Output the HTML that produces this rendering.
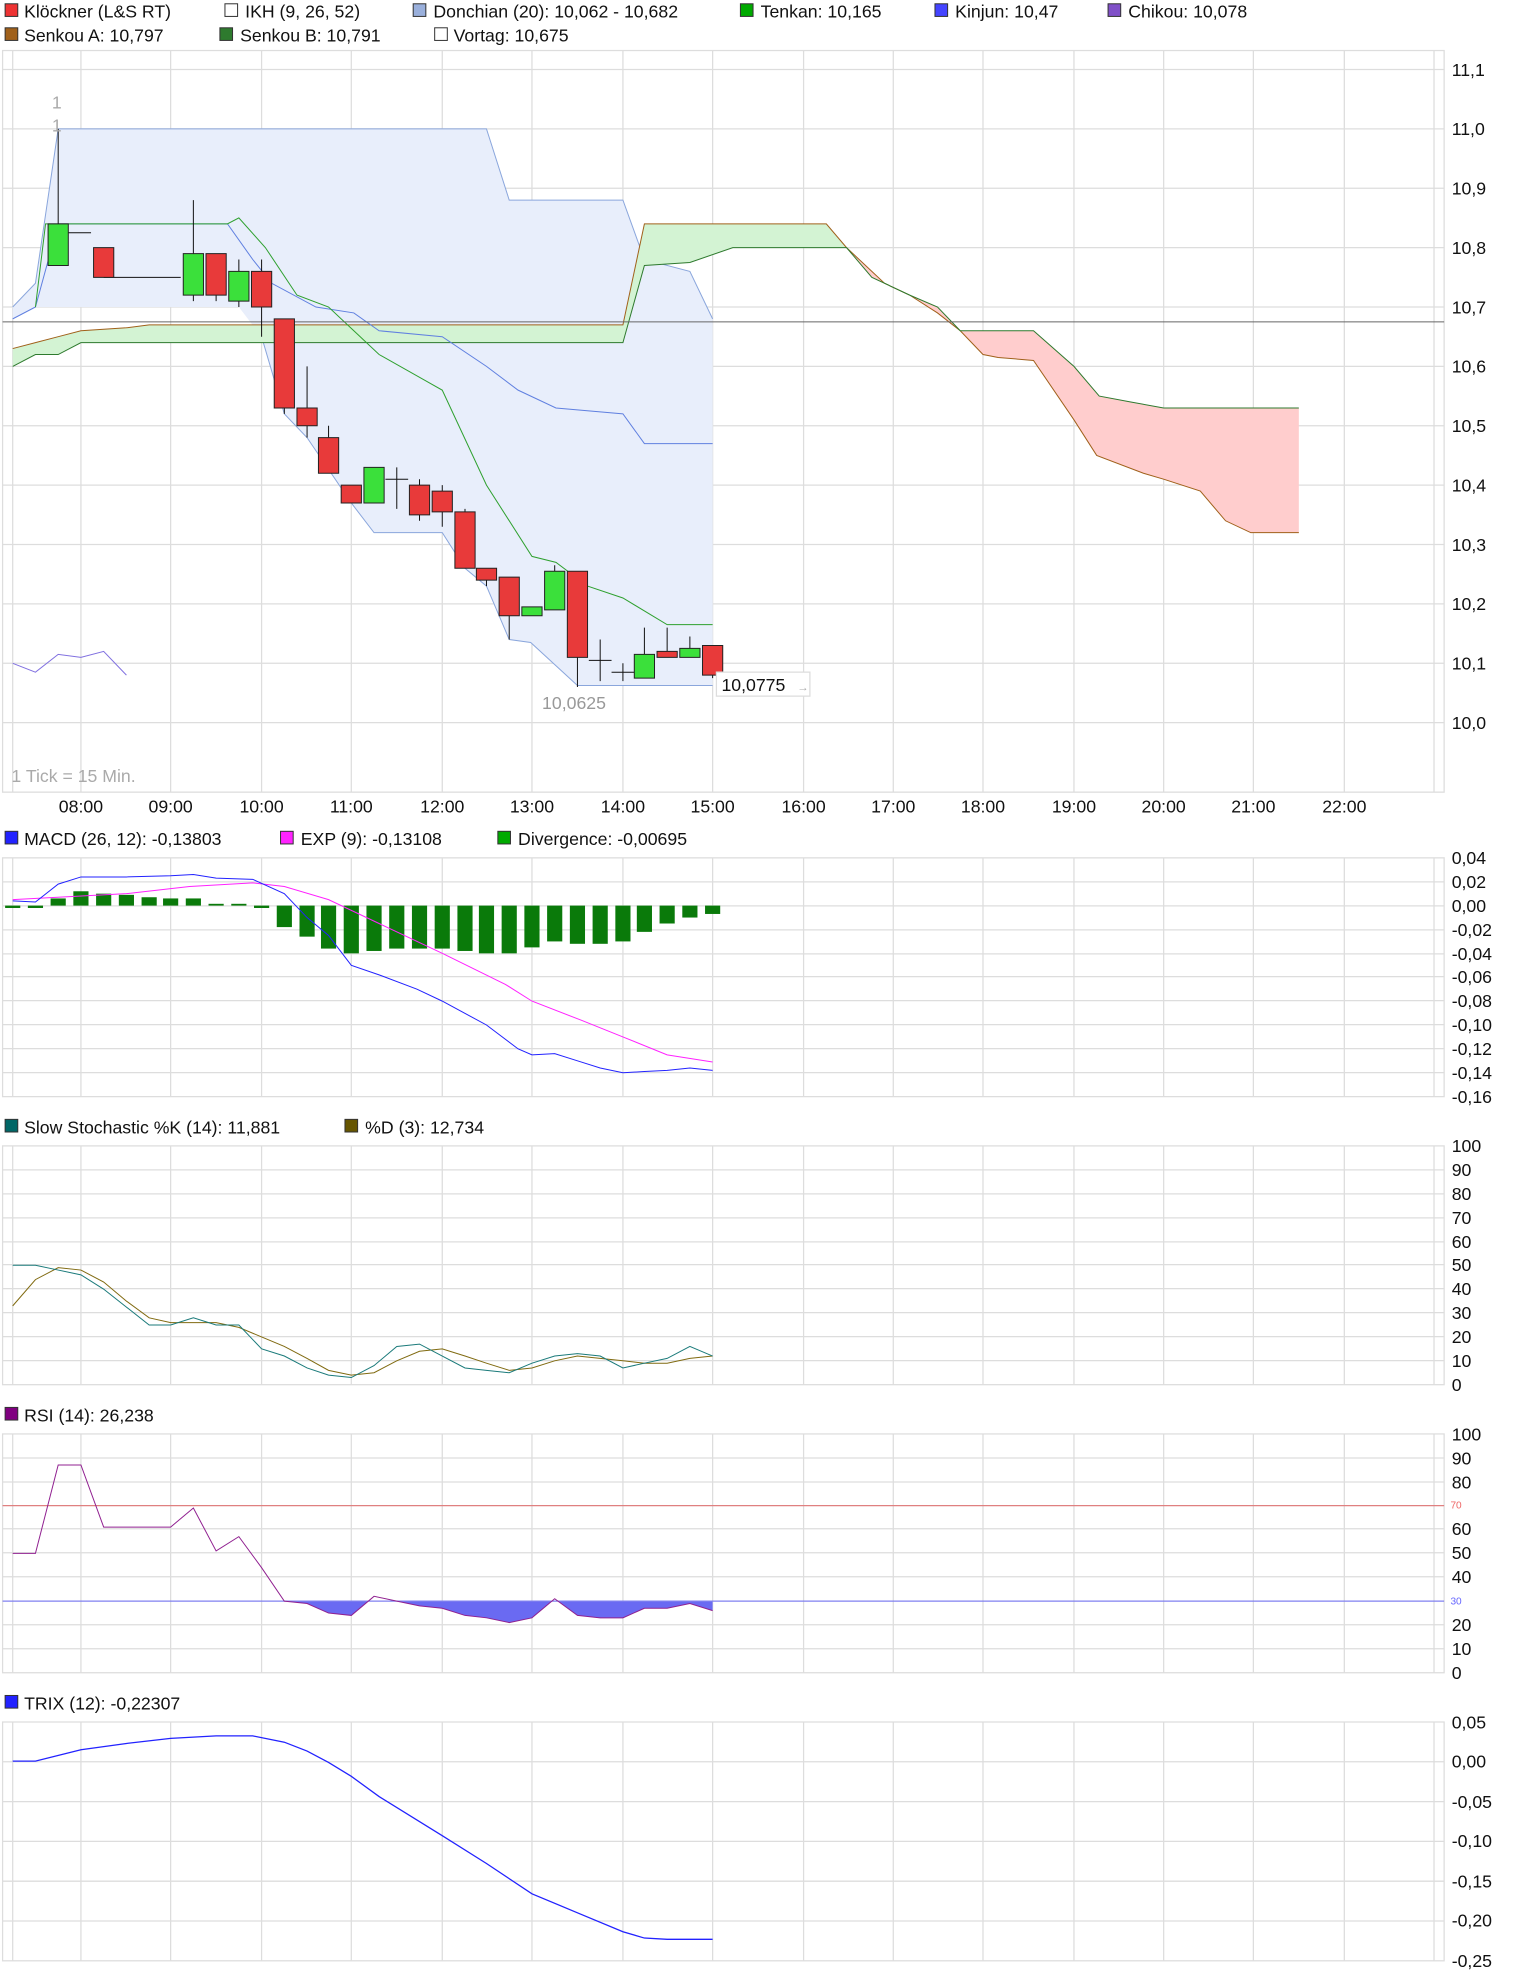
<!DOCTYPE html>
<html><head><meta charset="utf-8"><style>
html,body{margin:0;padding:0;background:#fff;width:1520px;height:1981px;overflow:hidden}
svg{display:block}
text{font-family:"Liberation Sans",sans-serif;font-size:14px;fill:#111}
.ax text{font-size:14px}
.g{stroke:#ddd;stroke-width:1;fill:none}
.ns{vector-effect:non-scaling-stroke}
</style></head><body>
<svg width="1520" height="1981" viewBox="0 0 1203 1568" xmlns="http://www.w3.org/2000/svg">
<g>
<rect x="4" y="3" width="10" height="10" fill="#e33" stroke="#333" stroke-width=".8"/><text x="19" y="14">Klöckner (L&amp;S RT)</text>
<rect x="178" y="3" width="10" height="10" fill="#fff" stroke="#333" stroke-width=".8"/><text x="194" y="14">IKH (9, 26, 52)</text>
<rect x="327" y="3" width="10" height="10" fill="#9ab0dc" stroke="#333" stroke-width=".8"/><text x="343" y="14">Donchian (20): 10,062 - 10,682</text>
<rect x="586" y="3" width="10" height="10" fill="#0a0" stroke="#333" stroke-width=".8"/><text x="602" y="14">Tenkan: 10,165</text>
<rect x="740" y="3" width="10" height="10" fill="#44f" stroke="#333" stroke-width=".8"/><text x="756" y="14">Kinjun: 10,47</text>
<rect x="877" y="3" width="10" height="10" fill="#8050c8" stroke="#333" stroke-width=".8"/><text x="893" y="14">Chikou: 10,078</text>
<rect x="4" y="22" width="10" height="10" fill="#a0601a" stroke="#333" stroke-width=".8"/><text x="19" y="33">Senkou A: 10,797</text>
<rect x="174" y="22" width="10" height="10" fill="#2e7a2e" stroke="#333" stroke-width=".8"/><text x="190" y="33">Senkou B: 10,791</text>
<rect x="344" y="22" width="10" height="10" fill="#fff" stroke="#333" stroke-width=".8"/><text x="359" y="33">Vortag: 10,675</text>
</g>

<g class="g">
<rect x="2" y="40" width="1141" height="587"/>
<path d="M10 40V627M64 40V627M135 40V627M207 40V627M278 40V627M350 40V627M421 40V627M493 40V627M564 40V627M636 40V627M707 40V627M778 40V627M850 40V627M921 40V627M992 40V627M1064 40V627M1135 40V627"/>
<path d="M2 55H1143M2 102H1143M2 149H1143M2 196H1143M2 243H1143M2 290H1143M2 337H1143M2 384H1143M2 431H1143M2 478H1143M2 525H1143M2 572H1143"/>
</g>
<g class="ax">
<text x="1149" y="60">11,1</text><text x="1149" y="107">11,0</text><text x="1149" y="154">10,9</text><text x="1149" y="201">10,8</text><text x="1149" y="248">10,7</text><text x="1149" y="295">10,6</text><text x="1149" y="342">10,5</text><text x="1149" y="389">10,4</text><text x="1149" y="436">10,3</text><text x="1149" y="483">10,2</text><text x="1149" y="530">10,1</text><text x="1149" y="577">10,0</text>
<g text-anchor="middle"><text x="64" y="643">08:00</text><text x="135" y="643">09:00</text><text x="207" y="643">10:00</text><text x="278" y="643">11:00</text><text x="350" y="643">12:00</text><text x="421" y="643">13:00</text><text x="493" y="643">14:00</text><text x="564" y="643">15:00</text><text x="636" y="643">16:00</text><text x="707" y="643">17:00</text><text x="778" y="643">18:00</text><text x="850" y="643">19:00</text><text x="921" y="643">20:00</text><text x="992" y="643">21:00</text><text x="1064" y="643">22:00</text></g>
</g>
<text x="9" y="619" style="fill:#aaa">1 Tick = 15 Min.</text>

<g transform="matrix(1 0 0 -470 0 5272)">
<polygon class="ns" fill="#e8eefb" stroke="none" points="10,10.7 28,10.74 46,11.0 385,11.0 403,10.88 493,10.88 510,10.78 546,10.76 564,10.68 564,10.0625 457,10.0625 420,10.135 403,10.14 385,10.23 368,10.26 350,10.32 296,10.32 278,10.37 243,10.48 225,10.52 207,10.65 189,10.7 46,10.7 28,10.7 10,10.68"/>
<polyline class="ns" fill="none" stroke="#8aa6dc" stroke-width="1" points="10,10.7 28,10.74 46,11.0 385,11.0 403,10.88 493,10.88 510,10.78 546,10.76 564,10.68"/>
<polyline class="ns" fill="none" stroke="#8aa6dc" stroke-width="1" points="207,10.65 225,10.52 243,10.48 278,10.37 296,10.32 350,10.32 368,10.26 385,10.23 403,10.14 420,10.135 457,10.0625 564,10.0625"/>
<polygon class="ns" fill="#d3f3d3" points="10,10.63 28,10.64 46,10.65 64,10.66 100,10.665 118,10.67 493,10.67 510,10.84 654,10.84 670,10.8 654,10.8 580,10.8 546,10.775 510,10.77 493,10.64 118,10.64 64,10.64 46,10.62 28,10.62 10,10.6"/>
<polygon class="ns" fill="#ffcdcd" points="654,10.84 670,10.8 690,10.75 720,10.72 742,10.7 760,10.66 818,10.66 850,10.6 870,10.55 895,10.54 921,10.53 1028,10.53 1028,10.32 990,10.32 970,10.34 950,10.39 921,10.41 905,10.42 868,10.45 850,10.51 818,10.61 790,10.615 778,10.62 760,10.66 742,10.69 720,10.72 700,10.74 690,10.76 670,10.8"/>
<polyline class="ns" fill="none" stroke="#a0601a" stroke-width="1" points="10,10.63 28,10.64 46,10.65 64,10.66 100,10.665 118,10.67 493,10.67 510,10.84 654,10.84 670,10.8 700,10.74 720,10.72 742,10.69 760,10.66 778,10.62 790,10.615 818,10.61 850,10.51 868,10.45 905,10.42 921,10.41 950,10.39 970,10.34 990,10.32 1028,10.32"/>
<polyline class="ns" fill="none" stroke="#2e7a2e" stroke-width="1" points="10,10.6 28,10.62 46,10.62 64,10.64 118,10.64 493,10.64 510,10.77 546,10.775 580,10.8 654,10.8 670,10.8 690,10.75 720,10.72 742,10.7 760,10.66 818,10.66 850,10.6 870,10.55 895,10.54 921,10.53 1028,10.53"/>
<polyline class="ns" fill="none" stroke="#6080e0" stroke-width="1" points="10,10.68 28,10.7 46,10.84 180,10.84 200,10.78 215,10.74 250,10.7 280,10.69 300,10.66 350,10.65 385,10.6 410,10.56 440,10.53 493,10.52 510,10.47 564,10.47"/>
<polyline class="ns" fill="none" stroke="#2ea02e" stroke-width="1" points="28,10.7 36,10.84 180,10.84 189,10.85 210,10.8 235,10.72 260,10.7 280,10.66 300,10.62 350,10.56 385,10.4 421,10.28 440,10.27 465,10.23 493,10.21 528,10.165 564,10.165"/>
<polyline class="ns" fill="none" stroke="#8070e0" stroke-width="1" points="10,10.1 28,10.085 46,10.115 64,10.11 82,10.12 100,10.08"/>
<line class="ns" x1="2" x2="1143" y1="10.675" y2="10.675" stroke="#666" stroke-width="1"/>
<g class="ns" stroke="#111" stroke-width="1">
<path class="ns" d="M46 11.0V10.77M153 10.88V10.71M171 10.79V10.71M189 10.78V10.70M207 10.78V10.65M225 10.68V10.52M243 10.60V10.48M260 10.50V10.42M278 10.40V10.37M296 10.43V10.37M314 10.43V10.36M332 10.41V10.34M350 10.40V10.33M368 10.36V10.26M385 10.26V10.23M403 10.245V10.14M421 10.195V10.18M439 10.265V10.19M457 10.255V10.06M475 10.14V10.07M493 10.1V10.07M510 10.16V10.075M528 10.16V10.11M546 10.145V10.11M564 10.13V10.075M46 10.825H72M82 10.75H143M305 10.41H323M466 10.105H484M484 10.085H502"/>
</g>
<g class="ns" stroke="#222" stroke-width="1">
<rect class="ns" fill="#3be03b" x="38" y="10.77" width="16" height="0.07"/>
<rect class="ns" fill="#e83a3a" x="74" y="10.75" width="16" height="0.05"/>
<rect class="ns" fill="#3be03b" x="145" y="10.72" width="16" height="0.07"/>
<rect class="ns" fill="#e83a3a" x="163" y="10.72" width="16" height="0.07"/>
<rect class="ns" fill="#3be03b" x="181" y="10.71" width="16" height="0.05"/>
<rect class="ns" fill="#e83a3a" x="199" y="10.70" width="16" height="0.06"/>
<rect class="ns" fill="#e83a3a" x="217" y="10.53" width="16" height="0.15"/>
<rect class="ns" fill="#e83a3a" x="235" y="10.50" width="16" height="0.03"/>
<rect class="ns" fill="#e83a3a" x="252" y="10.42" width="16" height="0.06"/>
<rect class="ns" fill="#e83a3a" x="270" y="10.37" width="16" height="0.03"/>
<rect class="ns" fill="#3be03b" x="288" y="10.37" width="16" height="0.06"/>
<rect class="ns" fill="#e83a3a" x="324" y="10.35" width="16" height="0.05"/>
<rect class="ns" fill="#e83a3a" x="342" y="10.355" width="16" height="0.035"/>
<rect class="ns" fill="#e83a3a" x="360" y="10.26" width="16" height="0.095"/>
<rect class="ns" fill="#e83a3a" x="377" y="10.24" width="16" height="0.02"/>
<rect class="ns" fill="#e83a3a" x="395" y="10.18" width="16" height="0.065"/>
<rect class="ns" fill="#3be03b" x="413" y="10.18" width="16" height="0.015"/>
<rect class="ns" fill="#3be03b" x="431" y="10.19" width="16" height="0.065"/>
<rect class="ns" fill="#e83a3a" x="449" y="10.11" width="16" height="0.145"/>
<rect class="ns" fill="#3be03b" x="502" y="10.075" width="16" height="0.04"/>
<rect class="ns" fill="#e83a3a" x="520" y="10.11" width="16" height="0.01"/>
<rect class="ns" fill="#3be03b" x="538" y="10.11" width="16" height="0.015"/>
<rect class="ns" fill="#e83a3a" x="556" y="10.08" width="16" height="0.05"/>
</g>
</g>
<text x="41" y="86" style="fill:#aaa">1</text>
<text x="41" y="104" style="fill:#aaa">1</text>
<text x="429" y="561" style="fill:#999">10,0625</text>
<rect x="567" y="532" width="74" height="19" fill="#fff" stroke="#ddd"/>
<text x="571" y="547">10,0775</text><text x="631" y="547" style="font-size:9px;fill:#aaa">→</text>

<rect x="4" y="658" width="10" height="10" fill="#22f" stroke="#333" stroke-width=".8"/><text x="19" y="669">MACD (26, 12): -0,13803</text>
<rect x="222" y="658" width="10" height="10" fill="#f2f" stroke="#333" stroke-width=".8"/><text x="238" y="669">EXP (9): -0,13108</text>
<rect x="394" y="658" width="10" height="10" fill="#0a0" stroke="#333" stroke-width=".8"/><text x="410" y="669">Divergence: -0,00695</text>
<g class="g">
<rect x="2" y="679" width="1141" height="189"/>
<path d="M10 679V868M64 679V868M135 679V868M207 679V868M278 679V868M350 679V868M421 679V868M493 679V868M564 679V868M636 679V868M707 679V868M778 679V868M850 679V868M921 679V868M992 679V868M1064 679V868M1135 679V868"/>
<path d="M2 698H1143M2 717H1143M2 736H1143M2 755H1143M2 773H1143M2 792H1143M2 811H1143M2 830H1143M2 849H1143"/>
</g>
<g class="ax"><text x="1149" y="684">0,04</text><text x="1149" y="703">0,02</text><text x="1149" y="722">0,00</text><text x="1149" y="741">-0,02</text><text x="1149" y="760">-0,04</text><text x="1149" y="778">-0,06</text><text x="1149" y="797">-0,08</text><text x="1149" y="816">-0,10</text><text x="1149" y="835">-0,12</text><text x="1149" y="854">-0,14</text><text x="1149" y="873">-0,16</text></g>
<g transform="matrix(1 0 0 -945 0 716.8)" fill="#0a7a0a">
<rect x="4" y="-0.002" width="12" height="0.002"/><rect x="22" y="-0.002" width="12" height="0.002"/><rect x="40" y="0" width="12" height="0.006"/><rect x="58" y="0" width="12" height="0.012"/><rect x="76" y="0" width="12" height="0.01"/><rect x="94" y="0" width="12" height="0.009"/><rect x="112" y="0" width="12" height="0.007"/><rect x="129" y="0" width="12" height="0.006"/><rect x="147" y="0" width="12" height="0.006"/><rect x="165" y="0" width="12" height="0.0015"/><rect x="183" y="0" width="12" height="0.0015"/><rect x="201" y="-0.002" width="12" height="0.002"/><rect x="219" y="-0.018" width="12" height="0.018"/><rect x="237" y="-0.026" width="12" height="0.026"/><rect x="254" y="-0.036" width="12" height="0.036"/><rect x="272" y="-0.04" width="12" height="0.04"/><rect x="290" y="-0.038" width="12" height="0.038"/><rect x="308" y="-0.036" width="12" height="0.036"/><rect x="326" y="-0.036" width="12" height="0.036"/><rect x="344" y="-0.036" width="12" height="0.036"/><rect x="362" y="-0.038" width="12" height="0.038"/><rect x="379" y="-0.04" width="12" height="0.04"/><rect x="397" y="-0.04" width="12" height="0.04"/><rect x="415" y="-0.035" width="12" height="0.035"/><rect x="433" y="-0.03" width="12" height="0.03"/><rect x="451" y="-0.032" width="12" height="0.032"/><rect x="469" y="-0.032" width="12" height="0.032"/><rect x="487" y="-0.03" width="12" height="0.03"/><rect x="504" y="-0.022" width="12" height="0.022"/><rect x="522" y="-0.015" width="12" height="0.015"/><rect x="540" y="-0.01" width="12" height="0.01"/><rect x="558" y="-0.007" width="12" height="0.007"/>
<polyline class="ns" fill="none" stroke="#f2f" stroke-width="1" points="10,0.005 100,0.01 150,0.016 200,0.019 225,0.016 260,0.005 300,-0.015 350,-0.04 400,-0.066 421,-0.08 460,-0.096 493,-0.11 528,-0.125 564,-0.131"/>
<polyline class="ns" fill="none" stroke="#22f" stroke-width="1" points="10,0.004 28,0.003 46,0.018 64,0.024 100,0.024 135,0.025 153,0.026 171,0.023 200,0.022 225,0.01 243,-0.01 260,-0.025 278,-0.05 300,-0.058 330,-0.07 350,-0.08 385,-0.1 410,-0.12 421,-0.125 439,-0.124 457,-0.13 475,-0.136 493,-0.14 510,-0.139 528,-0.138 546,-0.136 564,-0.138"/>
</g>

<rect x="4" y="886" width="10" height="10" fill="#066" stroke="#333" stroke-width=".8"/><text x="19" y="897">Slow Stochastic %K (14): 11,881</text>
<rect x="273" y="886" width="10" height="10" fill="#665500" stroke="#333" stroke-width=".8"/><text x="289" y="897">%D (3): 12,734</text>
<g class="g">
<rect x="2" y="907" width="1141" height="189"/>
<path d="M10 907V1096M64 907V1096M135 907V1096M207 907V1096M278 907V1096M350 907V1096M421 907V1096M493 907V1096M564 907V1096M636 907V1096M707 907V1096M778 907V1096M850 907V1096M921 907V1096M992 907V1096M1064 907V1096M1135 907V1096"/>
<path d="M2 926H1143M2 945H1143M2 964H1143M2 983H1143M2 1001H1143M2 1020H1143M2 1039H1143M2 1058H1143M2 1077H1143"/>
</g>
<g class="ax"><text x="1149" y="912">100</text><text x="1149" y="931">90</text><text x="1149" y="950">80</text><text x="1149" y="969">70</text><text x="1149" y="988">60</text><text x="1149" y="1006">50</text><text x="1149" y="1025">40</text><text x="1149" y="1044">30</text><text x="1149" y="1063">20</text><text x="1149" y="1082">10</text><text x="1149" y="1101">0</text></g>
<g transform="matrix(1 0 0 -1.89 0 1096)">
<polyline class="ns" fill="none" stroke="#806a10" stroke-width="1" points="10,33 28,44 46,49 64,48 82,43 100,35 118,28 135,26 153,26 171,26 189,24 207,20 225,16 243,11 260,6 278,4 296,5 314,10 332,14 350,15 368,12 385,9 403,6 421,7 439,10 457,12 475,11 493,10 510,9 528,9 546,11 564,12"/>
<polyline class="ns" fill="none" stroke="#1a7a7a" stroke-width="1" points="10,50 28,50 46,48 64,46 82,40 118,25 135,25 153,28 171,25 189,25 207,15 225,12 243,7 260,4 278,3 296,8 314,16 332,17 350,12 368,7 385,6 403,5 421,9 439,12 457,13 475,12 493,7 510,9 528,11 546,16 564,12"/>
</g>

<rect x="4" y="1114" width="10" height="10" fill="#800080" stroke="#333" stroke-width=".8"/><text x="19" y="1125">RSI (14): 26,238</text>
<g class="g">
<rect x="2" y="1135" width="1141" height="189"/>
<path d="M10 1135V1324M64 1135V1324M135 1135V1324M207 1135V1324M278 1135V1324M350 1135V1324M421 1135V1324M493 1135V1324M564 1135V1324M636 1135V1324M707 1135V1324M778 1135V1324M850 1135V1324M921 1135V1324M992 1135V1324M1064 1135V1324M1135 1135V1324"/>
<path d="M2 1154H1143M2 1173H1143M2 1210H1143M2 1229H1143M2 1248H1143M2 1286H1143M2 1305H1143"/>
</g>
<g class="ax"><text x="1149" y="1140">100</text><text x="1149" y="1159">90</text><text x="1149" y="1178">80</text><text x="1149" y="1215">60</text><text x="1149" y="1234">50</text><text x="1149" y="1253">40</text><text x="1149" y="1291">20</text><text x="1149" y="1310">10</text><text x="1149" y="1329">0</text></g>
<text x="1148" y="1194" style="font-size:8px;fill:#e66">70</text>
<text x="1148" y="1270" style="font-size:8px;fill:#66f">30</text>
<defs>
<clipPath id="a70"><rect x="0" y="1100" width="1200" height="91.7"/></clipPath>
<clipPath id="b30"><rect x="0" y="1267.3" width="1200" height="100"/></clipPath>
</defs>
<g transform="matrix(1 0 0 -1.89 0 1324)">
<polygon clip-path="url(#a70)" fill="#f26a6a" points="10,50 28,50 46,87 64,87 82,61 100,61"/>
</g>
<g clip-path="url(#b30)"><g transform="matrix(1 0 0 -1.89 0 1324)">
<polygon fill="#6a6af2" points="207,44 225,30 243,29 260,25 278,24 296,32 314,30 332,28 350,27 368,24 385,23 403,21 421,23 439,31 457,24 475,23 493,23 510,27 528,27 546,29 564,26 564,30 207,30"/>
</g></g>
<line x1="2" x2="1143" y1="1191.7" y2="1191.7" stroke="#e08080" stroke-width="1"/>
<line x1="2" x2="1143" y1="1267.3" y2="1267.3" stroke="#8080f0" stroke-width="1"/>
<g transform="matrix(1 0 0 -1.89 0 1324)">
<polyline class="ns" fill="none" stroke="#902090" stroke-width="1" points="10,50 28,50 46,87 64,87 82,61 100,61 118,61 135,61 153,69 171,51 189,57 207,44 225,30 243,29 260,25 278,24 296,32 314,30 332,28 350,27 368,24 385,23 403,21 421,23 439,31 457,24 475,23 493,23 510,27 528,27 546,29 564,26"/>
</g>

<rect x="4" y="1342" width="10" height="10" fill="#22f" stroke="#333" stroke-width=".8"/><text x="19" y="1353">TRIX (12): -0,22307</text>
<g class="g">
<rect x="2" y="1363" width="1141" height="189"/>
<path d="M10 1363V1552M64 1363V1552M135 1363V1552M207 1363V1552M278 1363V1552M350 1363V1552M421 1363V1552M493 1363V1552M564 1363V1552M636 1363V1552M707 1363V1552M778 1363V1552M850 1363V1552M921 1363V1552M992 1363V1552M1064 1363V1552M1135 1363V1552"/>
<path d="M2 1394.5H1143M2 1426H1143M2 1457.5H1143M2 1489H1143M2 1520.5H1143"/>
</g>
<g class="ax"><text x="1149" y="1368">0,05</text><text x="1149" y="1399">0,00</text><text x="1149" y="1431">-0,05</text><text x="1149" y="1462">-0,10</text><text x="1149" y="1494">-0,15</text><text x="1149" y="1525">-0,20</text><text x="1149" y="1557">-0,25</text></g>
<polyline fill="none" stroke="#22f" stroke-width="1" points="10,1394 28,1394 64,1385 100,1380 135,1376 171,1374 200,1374 225,1379 243,1386 260,1395 278,1406 300,1422 350,1453 385,1475 421,1499 457,1514 493,1529 510,1534 528,1535 564,1535"/>
</svg>
</body></html>
